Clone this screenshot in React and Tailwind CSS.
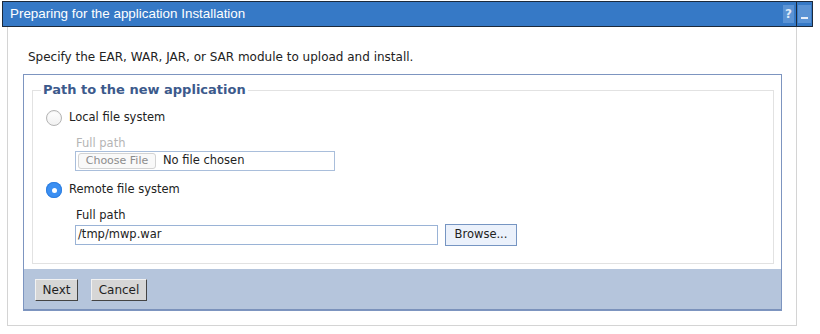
import React from "react";

const body = { fontFamily: '"DejaVu Sans", Verdana, sans-serif' };

function Radio({ checked }) {
  return checked ? (
    <span className="flex h-[16px] w-[16px] items-center justify-center rounded-full bg-[#3b8ff2] shadow-[inset_0_0_0_1px_#2f7fe0]">
      <span className="h-[5px] w-[5px] rounded-full bg-white" />
    </span>
  ) : (
    <span className="block h-[16px] w-[16px] rounded-full border border-[#b4b4b4] bg-gradient-to-b from-white to-[#f1f1f1] shadow-[inset_0_1px_1px_rgba(0,0,0,0.06)]" />
  );
}

function BarButton({ children, w }) {
  return (
    <button
      className={`h-[22px] ${w} border border-t-[#f2f2f2] border-l-[#f2f2f2] border-r-[#444] border-b-[#444] bg-[#d6d6d6] text-[12px] text-[#1f1f1f]`}
    >
      {children}
    </button>
  );
}

export default function App() {
  return (
    <div className="h-[334px] w-[820px] overflow-hidden bg-white pl-[2px] pt-[1px]" style={body}>
      {/* Title bar */}
      <div className="flex h-[26px] w-[811px] items-stretch border border-[#1c2a3c] bg-[#3679c6]">
        <span
          className="flex items-center pl-[7px] text-[13.4px] text-white"
          style={{ fontFamily: '"Liberation Sans", Arial, sans-serif' }}
        >
          Preparing for the application Installation
        </span>
        <div className="ml-auto flex items-center">
          <span className="mr-[2px] flex h-[18px] w-[11px] items-center justify-center bg-[#5b93d4] text-[12px] font-bold text-[#dfe9f7]">
            ?
          </span>
          <span className="h-full w-[1px] bg-[#1c2a3c]" />
          <span className="mx-[1px] flex h-[18px] w-[13px] items-end justify-center bg-[#5b93d4] pb-[4px]">
            <span className="block h-[2px] w-[7px] bg-[#e6eef9]" />
          </span>
        </div>
      </div>

      {/* Outer panel */}
      <div className="ml-[5px] h-[299px] w-[790px] border border-t-0 border-[#d4d4d4] pl-[15px] pt-[23px]">
        <p className="pl-[5px] text-[12px] leading-[14px] text-[#222]">
          Specify the EAR, WAR, JAR, or SAR module to upload and install.
        </p>

        {/* Form box */}
        <div className="mt-[10px] flex h-[237px] w-[759px] flex-col border border-[#7d95c0] bg-white">
          <div className="px-[8px] pt-[7px]">
            <fieldset className="h-[182px] w-[742px] border border-[#e2e2e2] pl-[13px]">
              <legend className="ml-[-5px] px-[2px] text-[13px] font-bold leading-[16px] text-[#3c5a8c]">
                Path to the new application
              </legend>

              <label className="mt-[12px] flex h-[16px] items-center gap-[7px] text-[11.5px] text-[#222]">
                <Radio />
                Local file system
              </label>

              <div className="pl-[29px]">
                <div className="mt-[10px] pl-[1px] text-[11.5px] leading-[14px] text-[#b5b5b5]">Full path</div>
                <div className="mt-[1px] flex h-[20px] w-[260px] items-center border border-[#a9bedb] pl-[2px]">
                  <span className="flex h-[16px] w-[78px] items-center justify-center rounded-[3px] border border-[#d3d3d3] bg-[#f9f9f9] text-[11px] text-[#8c8c8c]">
                    Choose File
                  </span>
                  <span className="ml-[7px] text-[11.5px] text-[#222]">No file chosen</span>
                </div>
              </div>

              <label className="mt-[11px] flex h-[16px] items-center gap-[7px] text-[11.5px] text-[#222]">
                <Radio checked />
                Remote file system
              </label>

              <div className="pl-[29px]">
                <div className="mt-[10px] pl-[1px] text-[11.5px] leading-[14px] text-[#222]">Full path</div>
                <div className="mt-[2px] flex items-center gap-[7px]">
                  <div className="flex h-[20px] w-[363px] items-center border border-[#9ab3d6] pl-[2px] text-[11.5px] text-[#222]">
                    /tmp/mwp.war
                  </div>
                  <button className="h-[22px] w-[72px] border border-[#7695c2] bg-[#ebf1fb] text-[11.5px] text-[#222]">
                    Browse...
                  </button>
                </div>
              </div>
            </fieldset>
          </div>

          {/* Button bar */}
          <div className="mt-auto flex h-[41px] gap-[13px] border-b border-[#7b92bb] bg-[#b5c5dc] pl-[11px] pt-[10px]">
            <BarButton w="w-[43px]">Next</BarButton>
            <BarButton w="w-[56px]">Cancel</BarButton>
          </div>
        </div>
      </div>
    </div>
  );
}
